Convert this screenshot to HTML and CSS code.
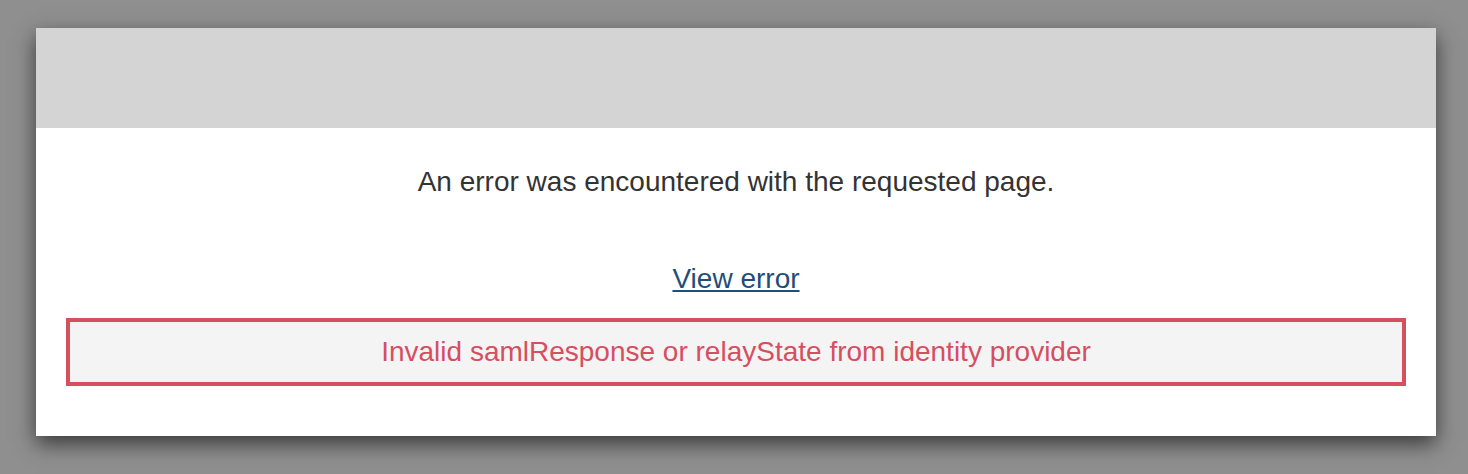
FILE: index.html
```html
<!DOCTYPE html>
<html>
<head>
<meta charset="utf-8">
<link rel="stylesheet" href="styles.css">
</head>
<body>
<div class="card">
  <div class="card-header"></div>
  <div class="card-body">
    <p class="message">An error was encountered with the requested page.</p>
    <a class="view-link" href="#">View error</a>
    <div class="error-box">Invalid samlResponse or relayState from identity provider</div>
  </div>
</div>
</body>
</html>
```
FILE: styles.css
```css
html, body {
  margin: 0;
  padding: 0;
  background: #8f8f8f;
  font-family: "Liberation Sans", Arial, sans-serif;
}
body {
  padding: 28px 32px 38px 36px;
}
.card {
  width: 1400px;
  background: #ffffff;
  box-shadow: 0 8px 20px rgba(0, 0, 0, 0.6);
}
.card-header {
  height: 100px;
  background: #d4d4d4;
}
.card-body {
  padding: 0 30px 50px;
  display: flex;
  flex-direction: column;
  align-items: center;
}
.message {
  margin: 38px 0 0;
  font-size: 28px;
  line-height: 32px;
  color: #333333;
}
.view-link {
  margin-top: 65px;
  font-size: 28px;
  line-height: 32px;
  color: #1f4e79;
  text-decoration: underline;
}
.error-box {
  align-self: stretch;
  margin-top: 23px;
  height: 60px;
  border: 4px solid #d64f5f;
  background: #f4f4f4;
  color: #d64f5f;
  font-size: 28px;
  line-height: 32px;
  display: flex;
  align-items: center;
  justify-content: center;
}
```
